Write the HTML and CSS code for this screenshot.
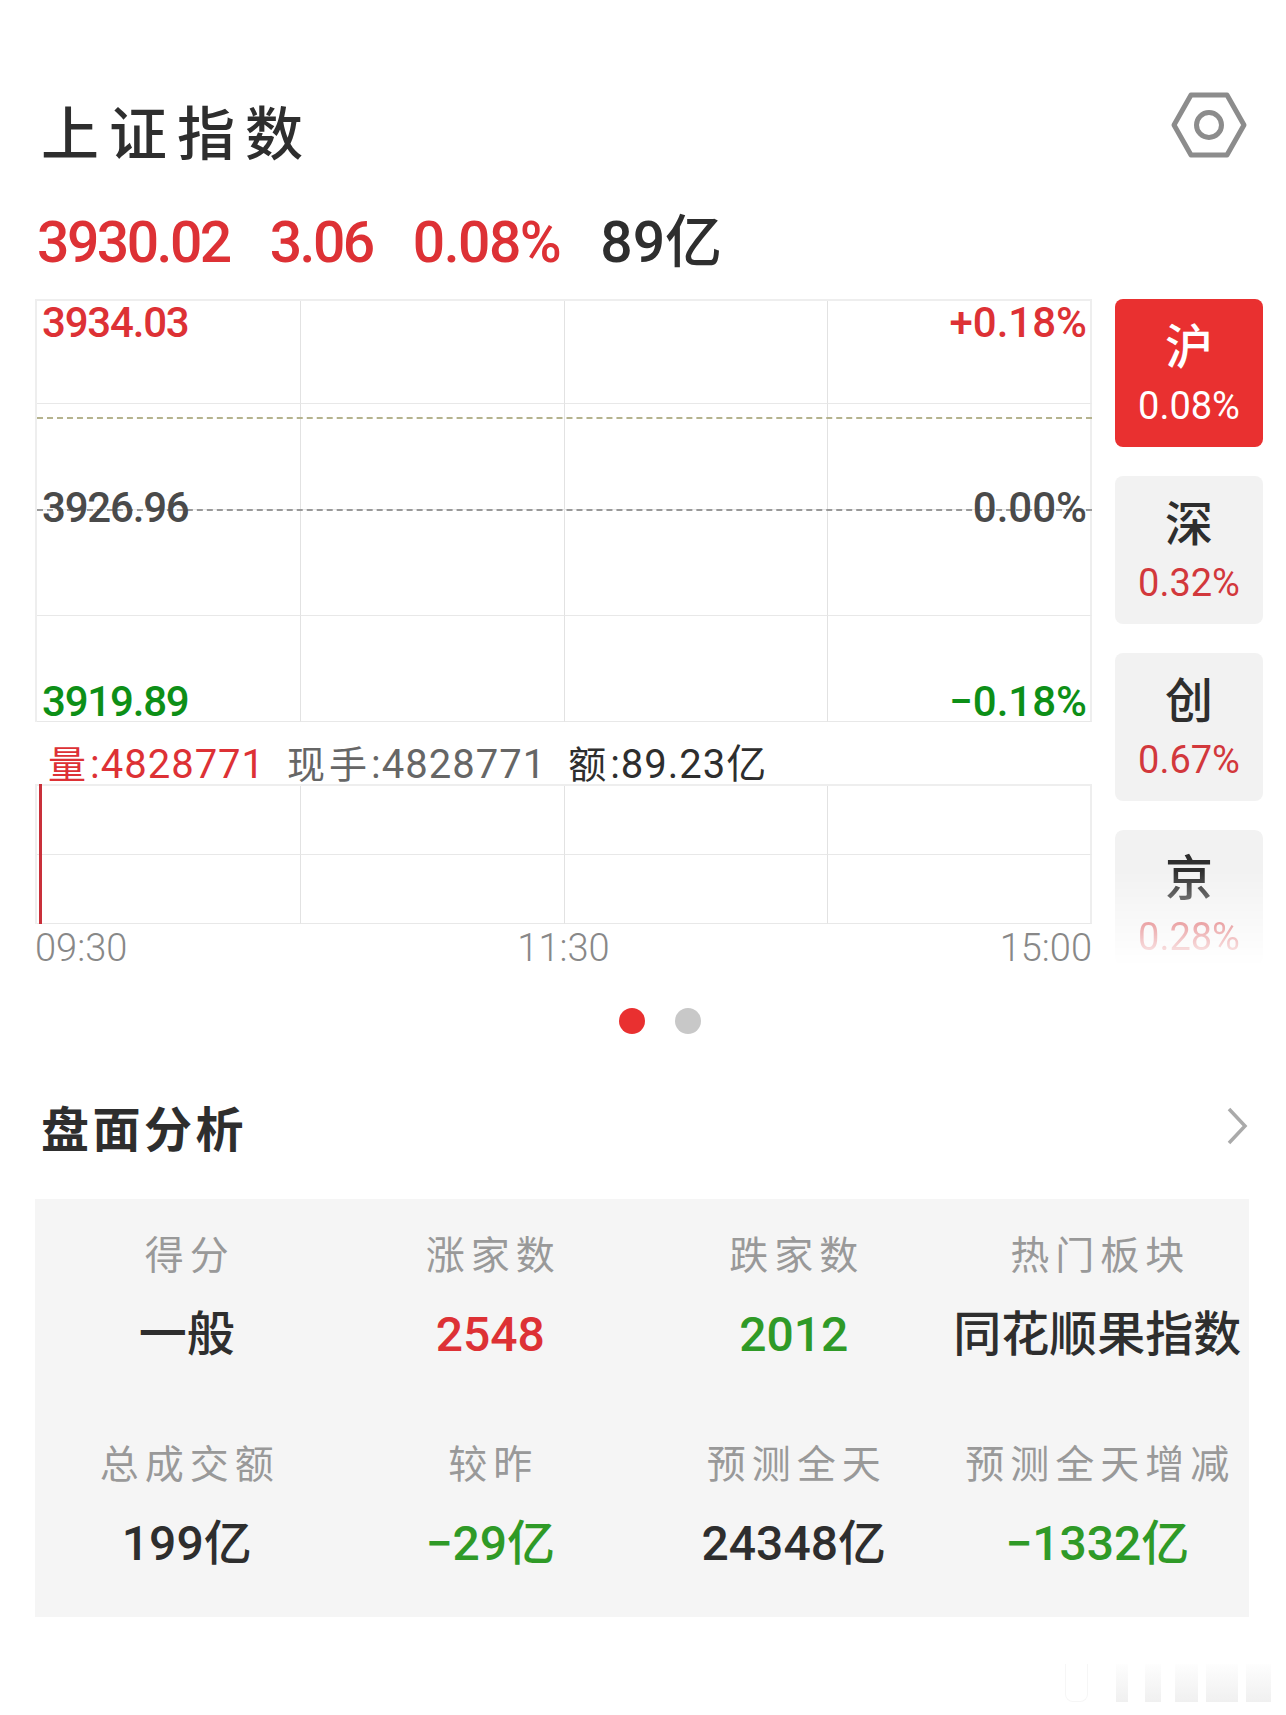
FILE: index.html
```html
<!DOCTYPE html>
<html lang="zh-CN">
<head>
    <meta charset="UTF-8">
    <title>上证指数</title>
    <link rel="stylesheet" href="styles.css">
</head>
<body>
    <header class="title-row">
        <h1>上证指数</h1>
        <svg class="gear" viewBox="0 0 76 66" width="76" height="66">
            <path d="M20 3H56L73 33L56 63H20L3 33Z" fill="none" stroke="#8c8c8c" stroke-width="5" stroke-linejoin="round"/>
            <circle cx="38" cy="33" r="12.5" fill="none" stroke="#8c8c8c" stroke-width="5"/>
        </svg>
    </header>

    <div class="quote">
        <span class="red">3930.02</span>
        <span class="red">3.06</span>
        <span class="red wide">0.08%</span>
        <span class="dark wider">89亿</span>
    </div>

    <div class="chart-row">
        <div class="charts">
            <div class="price-chart grid">
                <div class="cell"></div><div class="cell"></div><div class="cell"></div><div class="cell"></div>
                <div class="cell"></div><div class="cell"></div><div class="cell"></div><div class="cell"></div>
                <div class="cell"></div><div class="cell"></div><div class="cell"></div><div class="cell"></div>
                <div class="cell"></div><div class="cell"></div><div class="cell"></div><div class="cell"></div>
                <div class="dash dash-now"></div>
                <div class="dash dash-mid"></div>
                <span class="tag tl red">3934.03</span>
                <span class="tag tr red">+0.18%</span>
                <span class="tag ml gray">3926.96</span>
                <span class="tag mr gray">0.00%</span>
                <span class="tag bl green">3919.89</span>
                <span class="tag br green">−0.18%</span>
            </div>

            <div class="vol-text">
                <span class="red"><b>量</b>:4828771</span>
                <span class="mid"><b>现手</b>:4828771</span>
                <span class="dark"><b>额</b>:89.23亿</span>
            </div>

            <div class="vol-chart grid">
                <div class="cell"></div><div class="cell"></div><div class="cell"></div><div class="cell"></div>
                <div class="cell"></div><div class="cell"></div><div class="cell"></div><div class="cell"></div>
                <div class="vol-bar"></div>
            </div>

            <div class="times">
                <span>09:30</span>
                <span>11:30</span>
                <span>15:00</span>
            </div>
        </div>

        <div class="markets">
            <div class="market active"><strong>沪</strong><span>0.08%</span></div>
            <div class="market"><strong>深</strong><span>0.32%</span></div>
            <div class="market"><strong>创</strong><span>0.67%</span></div>
            <div class="market faded"><strong>京</strong><span>0.28%</span></div>
        </div>
    </div>

    <div class="dots">
        <i class="dot on"></i>
        <i class="dot"></i>
    </div>

    <div class="section-head">
        <h2>盘面分析</h2>
        <svg class="chevron" viewBox="0 0 22 38" width="22" height="38">
            <path d="M3 2L19 19L3 36" fill="none" stroke="#aaa" stroke-width="3.5"/>
        </svg>
    </div>

    <div class="panel">
        <div class="stat"><label>得分</label><p>一般</p></div>
        <div class="stat"><label>涨家数</label><p class="red">2548</p></div>
        <div class="stat"><label>跌家数</label><p class="green2">2012</p></div>
        <div class="stat"><label>热门板块</label><p>同花顺果指数</p></div>
        <div class="stat"><label>总成交额</label><p>199亿</p></div>
        <div class="stat"><label>较昨</label><p class="green2">−29亿</p></div>
        <div class="stat"><label>预测全天</label><p>24348亿</p></div>
        <div class="stat"><label>预测全天增减</label><p class="green2">−1332亿</p></div>
    </div>

    <div class="watermark">
        <i class="pill"></i>
        <i class="smudge w12"></i>
        <i class="smudge w16"></i>
        <i class="smudge w23"></i>
        <i class="smudge w32"></i>
        <i class="smudge w25"></i>
    </div>
</body>
</html>
```

FILE: styles.css
```css
* {
    box-sizing: border-box;
}

body {
    margin: 0;
    width: 1286px;
    height: 1715px;
    overflow: hidden;
    background: #fff;
    font-family: Roboto, "Noto Sans CJK SC", sans-serif;
    color: #2e2e2e;
}

.red { color: #dd3135; }
.green { color: #0d8f17; }
.green2 { color: #2f9a27; }
.gray { color: #4a4a4a; }
.mid { color: #666; }
.dark { color: #2e2e2e; }

.title-row {
    display: flex;
    justify-content: space-between;
    align-items: flex-start;
    height: 66px;
    margin-top: 97px;
    padding: 0 39px 0 41px;
}

h1 {
    margin: 0;
    font-family: "Noto Sans CJK SC", sans-serif;
    font-size: 58px;
    font-weight: 500;
    letter-spacing: 10px;
    line-height: 66px;
}

.gear {
    margin-top: -5px;
}

.quote {
    display: flex;
    gap: 40px;
    height: 64px;
    margin-top: 48px;
    padding-left: 37px;
    font-size: 57px;
    font-weight: 500;
    line-height: 64px;
    letter-spacing: -2.5px;
}

.quote .wide { letter-spacing: -1.5px; }
.quote .wider { letter-spacing: 0; }

.chart-row {
    display: flex;
    gap: 23px;
    margin-top: 24px;
    padding-left: 35px;
}

.charts {
    width: 1057px;
}

.grid {
    position: relative;
    display: grid;
    grid-template-columns: repeat(4, 1fr);
    border-top: 2px solid #eee;
    border-left: 2px solid #eee;
}

.cell {
    border-right: 1px solid #e2e2e2;
    border-bottom: 1px solid #e8e8e8;
}

.cell:nth-child(4n) {
    border-right: 2px solid #eee;
}

.price-chart {
    grid-template-rows: 103px 106px 106px 106px;
    height: 423px;
}

.dash {
    position: absolute;
    left: 0;
    right: 0;
    height: 0;
    border-top: 2px dashed #999;
}

.dash-now {
    top: 116px;
    border-color: #b5b38e;
}

.dash-mid {
    top: 208px;
}

.tag {
    position: absolute;
    font-size: 42px;
    font-weight: 500;
    line-height: 48px;
}

.tl, .ml, .bl {
    left: 5px;
    letter-spacing: -1.2px;
}

.tr, .mr, .br { right: 5px; }
.tl, .tr { top: -2px; }
.ml, .mr { top: 183px; }
.bl, .br { top: 377px; }

.vol-text {
    display: flex;
    gap: 22px;
    height: 62px;
    padding: 18px 0 0 13px;
    font-size: 40px;
    line-height: 44px;
    letter-spacing: 1px;
    white-space: nowrap;
}

.vol-text b {
    font-family: "Noto Sans CJK SC", sans-serif;
    font-size: 38px;
    font-weight: 400;
    letter-spacing: 4px;
}

.vol-chart {
    grid-template-rows: repeat(2, 69px);
    height: 140px;
}

.vol-bar {
    position: absolute;
    left: 2px;
    top: -2px;
    bottom: 0;
    width: 3px;
    background: #c9303a;
}

.times {
    display: flex;
    justify-content: space-between;
    height: 44px;
    font-size: 38px;
    font-weight: 300;
    line-height: 48px;
    color: #888;
}

.markets {
    display: flex;
    flex-direction: column;
    gap: 29px;
    width: 148px;
}

.market {
    display: flex;
    flex-direction: column;
    align-items: center;
    height: 148px;
    padding-top: 11px;
    border-radius: 8px;
    background: #f2f2f2;
    color: #d2383c;
}

.market strong {
    margin-bottom: 7px;
    font-family: "Noto Sans CJK SC", sans-serif;
    font-size: 48px;
    font-weight: 500;
    line-height: 66px;
    color: #2e2e2e;
}

.market span {
    font-size: 38px;
    line-height: 46px;
}

.market.active {
    background: #e93030;
    color: #fff;
}

.market.active strong {
    color: #fff;
}

.market.faded {
    height: 136px;
    -webkit-mask-image: linear-gradient(#000 30%, rgba(0,0,0,0.15) 90%, transparent);
    mask-image: linear-gradient(#000 30%, rgba(0,0,0,0.15) 90%, transparent);
}

.dots {
    display: flex;
    justify-content: center;
    gap: 30px;
    margin-top: 40px;
    padding-left: 34px;
}

.dot {
    width: 26px;
    height: 26px;
    border-radius: 50%;
    background: #c8c8c8;
}

.dot.on {
    background: #e93030;
}

.section-head {
    display: flex;
    justify-content: space-between;
    align-items: center;
    height: 50px;
    margin-top: 67px;
    padding: 0 38px 0 41px;
}

h2 {
    margin: 0;
    font-family: "Noto Sans CJK SC", sans-serif;
    font-size: 48px;
    font-weight: 700;
    letter-spacing: 3.5px;
    line-height: 50px;
}

.panel {
    display: grid;
    grid-template-columns: repeat(4, 1fr);
    grid-template-rows: 209px 1fr;
    width: 1214px;
    height: 418px;
    margin: 48px 0 0 35px;
    padding-top: 26px;
    background: #f5f5f5;
    text-align: center;
}

.stat label {
    display: block;
    padding-left: 6px;
    font-family: "Noto Sans CJK SC", sans-serif;
    font-size: 39px;
    letter-spacing: 6px;
    line-height: 54px;
    color: #999;
}

.stat p {
    margin: 29px 0 0;
    font-size: 48px;
    font-weight: 500;
    line-height: 54px;
    white-space: nowrap;
}

/* blurred site mark in the bottom corner */
.watermark {
    display: flex;
    gap: 28px;
    height: 38px;
    margin: 47px 0 0 1065px;
}

.pill {
    width: 23px;
    border: 1px solid #f6f6f6;
    border-top: none;
    border-radius: 0 0 8px 8px;
}

.smudge {
    background: linear-gradient(rgba(225,225,225,0.05), rgba(225,225,225,0.5));
}

.w12 { width: 12px; }
.w16 { width: 16px; margin-left: -11px; }
.w23 { width: 23px; margin-left: -14px; }
.w32 { width: 32px; margin-left: -20px; }
.w25 { width: 25px; margin-left: -20px; }
```
